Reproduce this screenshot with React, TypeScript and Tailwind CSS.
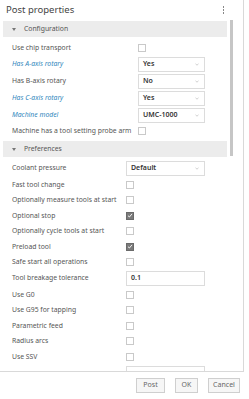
import React from "react";

type Row =
  | { kind: "check"; label: string; checked?: boolean; blue?: boolean }
  | { kind: "select"; label: string; value: string; blue?: boolean }
  | { kind: "input"; label: string; value: string };

const config: Row[] = [
  { kind: "check", label: "Use chip transport" },
  { kind: "select", label: "Has A-axis rotary", value: "Yes", blue: true },
  { kind: "select", label: "Has B-axis rotary", value: "No" },
  { kind: "select", label: "Has C-axis rotary", value: "Yes", blue: true },
  { kind: "select", label: "Machine model", value: "UMC-1000", blue: true },
  { kind: "check", label: "Machine has a tool setting probe arm" },
];

const prefs: Row[] = [
  { kind: "select", label: "Coolant pressure", value: "Default" },
  { kind: "check", label: "Fast tool change" },
  { kind: "check", label: "Optionally measure tools at start" },
  { kind: "check", label: "Optional stop", checked: true },
  { kind: "check", label: "Optionally cycle tools at start" },
  { kind: "check", label: "Preload tool", checked: true },
  { kind: "check", label: "Safe start all operations" },
  { kind: "input", label: "Tool breakage tolerance", value: "0.1" },
  { kind: "check", label: "Use G0" },
  { kind: "check", label: "Use G95 for tapping" },
  { kind: "check", label: "Parametric feed" },
  { kind: "check", label: "Radius arcs" },
  { kind: "check", label: "Use SSV" },
  { kind: "input", label: "", value: "" },
];

function Check({ checked }: { checked?: boolean }) {
  if (checked) {
    return (
      <div className="w-[8px] h-[8px] bg-[#7a7a7a] border border-[#6a6a6a] flex items-center justify-center">
        <svg width="7" height="7" viewBox="0 0 8 8">
          <path d="M1.3 4.2 L3.2 6 L6.7 1.8" fill="none" stroke="#fff" strokeWidth="1.2" />
        </svg>
      </div>
    );
  }
  return <div className="w-[8px] h-[8px] border border-[#c9c9c9] bg-white" />;
}

function Value({ row }: { row: Row }) {
  if (row.kind === "check") {
    return (
      <div className="flex items-center h-[15.5px]">
        <Check checked={row.checked} />
      </div>
    );
  }
  if (row.kind === "select") {
    return (
      <div className="h-[17px] flex items-center">
        <div className="w-full h-[15px] border border-[#dcdcdc] bg-white flex items-center justify-between pl-[4px] pr-[5px]">
          <span className="text-[7px] font-semibold text-[#333]">{row.value}</span>
          <svg width="4" height="3" viewBox="0 0 4 3">
            <path d="M0.5 0.8 L2 2.2 L3.5 0.8" fill="none" stroke="#bbb" strokeWidth="0.7" />
          </svg>
        </div>
      </div>
    );
  }
  return (
    <div className="h-[17px] flex items-center">
      <div className="w-full h-[15px] border border-[#dcdcdc] bg-white flex items-center pl-[4px]">
        <span className="text-[7px] font-semibold text-[#333]">{row.value}</span>
      </div>
    </div>
  );
}

function Section({ title, rows, labelW, valueW }: { title: string; rows: Row[]; labelW: string; valueW: string }) {
  return (
    <div>
      <div className="ml-[3px] w-[224px] h-[16px] bg-[#ececec] flex items-center">
        <svg className="ml-[9px]" width="4" height="3" viewBox="0 0 4 3">
          <path d="M0 0 L4 0 L2 3 Z" fill="#777" />
        </svg>
        <span className="ml-[8px] text-[6.8px] text-[#555]">{title}</span>
      </div>
      <div className="pt-[3px] pb-[2px] pl-[12px]">
        {rows.map((r, i) => (
          <div key={i} className="flex items-center">
            <div className={`${labelW} shrink-0 text-[6.8px] whitespace-nowrap ${"blue" in r && r.blue ? "italic text-[#3287bd]" : "text-[#555]"}`}>
              {r.label}
            </div>
            <div className={valueW}>
              <Value row={r} />
            </div>
          </div>
        ))}
      </div>
    </div>
  );
}

export default function App() {
  return (
    <div className="w-[249px] h-[399px] bg-white flex flex-col overflow-hidden" style={{ fontFamily: '"Noto Sans", "Open Sans", sans-serif' }}>
      <div className="w-[244px] h-[372px] border-r border-b border-[#d9d9d9] flex flex-col overflow-hidden">
        <div className="h-[20px] shrink-0 flex items-center justify-between pl-[6px] pr-[19px]">
          <span className="text-[9.5px] text-[#444]">Post properties</span>
          <div className="flex flex-col gap-[1.5px]">
            <div className="w-[1.5px] h-[1.5px] bg-[#888]" />
            <div className="w-[1.5px] h-[1.5px] bg-[#888]" />
            <div className="w-[1.5px] h-[1.5px] bg-[#888]" />
          </div>
        </div>
        <div className="flex flex-1 min-h-0">
          <div className="w-[229px] shrink-0 overflow-hidden pt-[1px]">
            <Section title="Configuration" rows={config} labelW="w-[126px]" valueW="w-[67px]" />
            <Section title="Preferences" rows={prefs} labelW="w-[114px]" valueW="w-[79px]" />
          </div>
          <div className="w-[3px] ml-[1px]">
            <div className="w-[3px] h-[136px] bg-[#c6c6c6]" />
          </div>
        </div>
      </div>
      <div className="flex justify-end gap-[10px] pr-[9px] pt-[6px]">
        <button className="w-[29px] h-[15px] border border-[#cfcfcf] bg-[#f6f6f6] text-[7px] text-[#666] flex items-center justify-center">Post</button>
        <button className="w-[23px] h-[15px] border border-[#cfcfcf] bg-[#f6f6f6] text-[7px] text-[#666] flex items-center justify-center">OK</button>
        <button className="w-[32px] h-[15px] border border-[#cfcfcf] bg-[#f6f6f6] text-[7px] text-[#666] flex items-center justify-center">Cancel</button>
      </div>
    </div>
  );
}
